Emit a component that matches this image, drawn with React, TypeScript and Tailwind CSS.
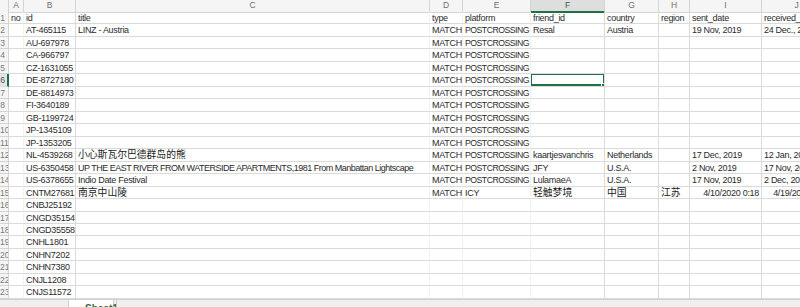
import React from 'react'

type Cell = string | { v: string; right?: boolean; cjk?: boolean; tight?: boolean; caps?: boolean }

const cols = [
	{ key: 'A', border: 'border-[#f1f1f1]' },
	{ key: 'B', border: 'border-[#dadada]' },
	{ key: 'C', border: 'border-[#f1f1f1]' },
	{ key: 'D', border: 'border-[#f1f1f1]' },
	{ key: 'E', border: 'border-[#f1f1f1]' },
	{ key: 'F', border: 'border-[#dadada]' },
	{ key: 'G', border: 'border-[#dadada]' },
	{ key: 'H', border: 'border-[#dadada]' },
	{ key: 'I', border: 'border-[#dadada]' },
	{ key: 'J', border: 'border-[#dadada]' },
]

const ids = [
	'AT-465115', 'AU-697978', 'CA-966797', 'CZ-1631055', 'DE-8727180', 'DE-8814973', 'FI-3640189',
	'GB-1199724', 'JP-1345109', 'JP-1353205', 'NL-4539268', 'US-6350458', 'US-6378655', 'CNTM27681',
	'CNBJ25192', 'CNGD35154', 'CNGD35558', 'CNHL1801', 'CNHN7202', 'CNHN7380', 'CNJL1208', 'CNJS11572',
]

const PC: Cell = { v: 'POSTCROSSING', caps: true }

const extra: Record<number, Cell[]> = {
	0: ['LINZ - Austria', 'MATCH', PC, 'Resal', 'Austria', '', '19 Nov, 2019', '24 Dec., 2019'],
	10: [{ v: '小心斯瓦尔巴德群岛的熊', cjk: true }, 'MATCH', PC, 'kaartjesvanchris', 'Netherlands', '', '17 Dec, 2019', '12 Jan, 2020'],
	11: [
		{ v: 'UP THE EAST RIVER FROM WATERSIDE APARTMENTS,1981 From Manbattan Lightscape', tight: true },
		'MATCH', PC, 'JFY', 'U.S.A.', '', '2 Nov, 2019', '17 Nov, 2019',
	],
	12: ['Indio Date Festival', 'MATCH', PC, 'LulamaeA', 'U.S.A.', '', '17 Nov, 2019', '2 Dec, 2019'],
	13: [
		{ v: '南京中山陵', cjk: true }, 'MATCH', 'ICY', { v: '轻触梦境', cjk: true }, { v: '中国', cjk: true },
		{ v: '江苏', cjk: true }, { v: '4/10/2020 0:18', right: true }, { v: '4/19/2020 0:00', right: true },
	],
}

const rows: Cell[][] = [
	['no', 'id', 'title', 'type', 'platform', 'friend_id', 'country', 'region', 'sent_date', 'received_date'],
	...ids.map((id, i) => {
		const rest: Cell[] = extra[i] ?? (i < 14 ? ['', 'MATCH', PC] : [])
		const filled = [...rest]
		while (filled.length < 8) filled.push('')
		return ['', id, ...filled]
	}),
]

const grid = 'grid grid-cols-[9px_15px_52px_354px_33px_68px_74px_54px_31px_72px_70px]'

const App = () => {
	return (
		<div className="w-[800px] h-[307px] overflow-hidden bg-white text-[#2b2b2b] font-['Liberation_Sans','Noto_Sans_CJK_SC',sans-serif] text-[9px] tracking-[-0.3px]">
			<div className="w-[832px]">
				{/* Column letters */}
				<div className={`${grid} h-[12px] bg-[#f5f5f5] text-[#707070] text-[8.5px] leading-[11px] tracking-normal`}>
					<div className="border-r border-b border-[#d4d4d4]"></div>
					{cols.map((c) => (
						<div
							key={c.key}
							className={
								c.key === 'F'
									? 'bg-[#dedede] border-r border-[#d4d4d4] border-b-2 border-b-[#1e7145] text-center text-[#3c5a48]'
									: 'border-r border-b border-[#d4d4d4] text-center'
							}
						>
							{c.key}
						</div>
					))}
				</div>

				{rows.map((row, r) => (
					<div key={r} className={`${grid} h-[12.48px]`}>
						<div
							className={
								r === 5
									? 'bg-[#e4e4e4] border-r-2 border-r-[#1e7145] border-b border-[#dadada] text-right pr-[2px] text-[8.5px] leading-[12px] tracking-normal text-[#555] overflow-hidden whitespace-nowrap'
									: 'bg-[#f5f5f5] border-r border-b border-[#d4d4d4] text-right pr-[3px] text-[8.5px] leading-[12px] tracking-normal text-[#7a7a7a] overflow-hidden whitespace-nowrap'
							}
						>
							{r + 1}
						</div>
						{row.map((cell, c) => {
							const v = typeof cell === 'string' ? cell : cell.v
							const right = typeof cell !== 'string' && cell.right
							const cjk = typeof cell !== 'string' && cell.cjk
							const tight = typeof cell !== 'string' && cell.tight
							const caps = typeof cell !== 'string' && cell.caps
							const selected = r === 5 && c === 5
							return (
								<div
									key={c}
									className={`relative border-r border-b border-b-[#dadada] ${cols[c].border} pl-[2px] ${caps ? 'pr-0 text-[8.7px] tracking-[-0.5px]' : 'pr-[2px]'} leading-[12px] whitespace-nowrap overflow-hidden ${
										right ? 'text-right' : 'text-left'
									} ${cjk ? 'text-[9.8px] tracking-normal text-[#1a1a1a]' : ''} ${tight ? 'tracking-[-0.5px]' : ''}`}
								>
									{v}
									{selected && (
										<>
											<div className="absolute -top-px -left-px right-[-1px] bottom-0 border-2 border-[#1e7145]"></div>
											<div className="absolute right-[-1px] bottom-[-1px] w-[4px] h-[4px] bg-[#1e7145] border border-white"></div>
										</>
									)}
								</div>
							)
						})}
					</div>
				))}

				{/* Sheet tabs strip */}
				<div className="flex h-[8px] bg-[#efefef] border-t border-[#d0d0d0] overflow-hidden">
					<div className="w-[68px]"></div>
					<div className="w-[46px] bg-white border-x border-[#d0d0d0] pl-[16px] pt-[4px] text-[10px] leading-[10px] font-bold tracking-normal text-[#1e7145]">
						Sheet1
					</div>
					<div className="w-[2px]"></div>
					<div className="w-px bg-[#c8c8c8]"></div>
				</div>
			</div>
		</div>
	)
}

export default App
